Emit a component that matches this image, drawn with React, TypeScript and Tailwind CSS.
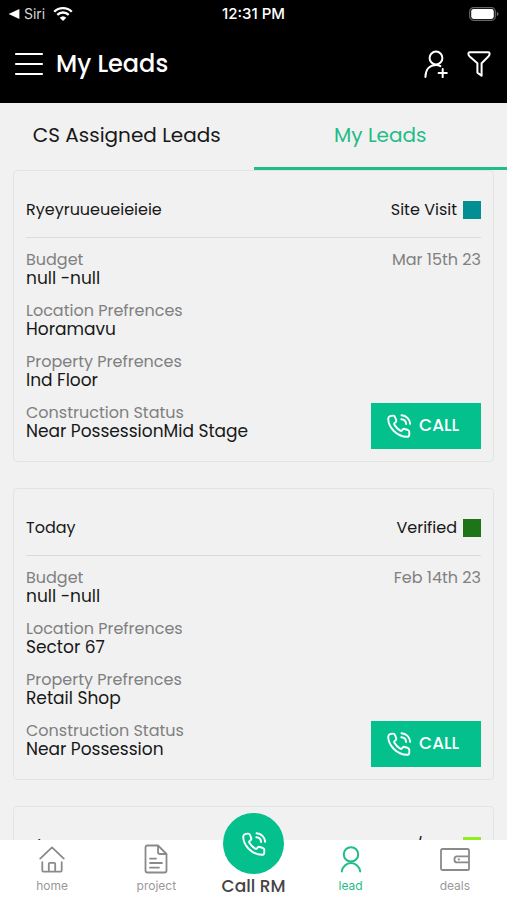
import { useState } from "react";

type Lead = {
  name: string;
  status: string;
  color: string;
  date: string;
  budget: string;
  location: string;
  property: string;
  construction: string;
};

const leads: Lead[] = [
  {
    name: "Ryeyruueueieieie",
    status: "Site Visit",
    color: "bg-[#028e92]",
    date: "Mar 15th 23",
    budget: "null -null",
    location: "Horamavu",
    property: "Ind Floor",
    construction: "Near PossessionMid Stage",
  },
  {
    name: "Today",
    status: "Verified",
    color: "bg-[#1d7419]",
    date: "Feb 14th 23",
    budget: "null -null",
    location: "Sector 67",
    property: "Retail Shop",
    construction: "Near Possession",
  },
  {
    name: "Nina",
    status: "Not Int/New",
    color: "bg-[#8cf01c]",
    date: "Feb 14th 23",
    budget: "null -null",
    location: "Sector 67",
    property: "Retail Shop",
    construction: "Near Possession",
  },
];

const PhoneIcon = ({ className }: { className: string }) => (
  <svg
    viewBox="0 0 24 24"
    fill="none"
    stroke="currentColor"
    strokeWidth="1.9"
    strokeLinecap="round"
    strokeLinejoin="round"
    className={className}
    aria-hidden="true"
  >
    <path d="M3.5 2 6 1.6Q7.4 1.4 8 3L9.2 6.2Q9.6 7.4 8.6 8.2L7.6 9Q6.8 9.8 7.4 10.8 9.6 14.6 13.2 16.6 14.2 17.2 15 16.3L15.8 15.4Q16.6 14.5 17.8 15L21 16Q22.4 16.6 22.3 18V20.6Q22.2 22.8 20 22.8C10 22.6 1.2 13.5 1.2 4.6Q1.4 2.4 3.5 2Z" />
    <path d="M14.5 1.2a9 9 0 0 1 8.6 8.6M14.3 5.2a5.2 5.2 0 0 1 4.8 4.8" />
  </svg>
);

const StatusBar = () => (
  <div className="grid grid-cols-3 items-center h-7 px-2 font-[Inter,sans-serif] text-sm text-white">
    <div className="flex items-center gap-1">
      <svg viewBox="0 0 10 10" className="w-3 h-3" fill="currentColor">
        <path d="M.5 5 9.5 .8V9.2Z" />
      </svg>
      <span className="text-[#d6d6d6]">Siri</span>
      <svg viewBox="0 0 20 15" className="w-5 h-4 ml-1" fill="none" stroke="currentColor" strokeWidth="2.3">
        <path d="M1.2 5.2a12.4 12.4 0 0 1 17.6 0M4.3 8.4a8 8 0 0 1 11.4 0" />
        <path d="M10 14.6 6.7 11.2a4.8 4.8 0 0 1 6.6 0Z" fill="currentColor" stroke="none" />
      </svg>
    </div>
    <div className="text-center text-[15px] font-medium">12:31 PM</div>
    <svg viewBox="0 0 30 14" className="w-[30px] h-[14px] justify-self-end">
      <rect x=".7" y=".7" width="25.6" height="12.6" rx="3.8" fill="none" stroke="#686868" strokeWidth="1.2" />
      <rect x="2.2" y="2.1" width="22.6" height="9.8" rx="2.3" fill="#fff" />
      <path d="M27.8 4.7q1.8.8 1.8 2.3t-1.8 2.3Z" fill="#686868" />
    </svg>
  </div>
);

const Header = () => (
  <header className="flex items-center h-[75px] pb-1 px-[14px] text-white">
    <button aria-label="Menu" className="mr-3">
      <svg viewBox="0 0 30 26" className="w-[30px] h-[26px]" stroke="currentColor" strokeWidth="2.2" strokeLinecap="round">
        <path d="M2 3h26M2 13h26M2 23h26" />
      </svg>
    </button>
    <h1 className="text-2xl leading-7 font-medium">My Leads</h1>
    <div className="flex items-center gap-[18px] ml-auto pr-[2px]">
      <button aria-label="Add lead">
        <svg viewBox="0 0 26 28" className="w-[26px] h-[28px]" fill="none" stroke="currentColor" strokeWidth="2" strokeLinecap="round">
          <circle cx="13" cy="8" r="6.4" />
          <path d="M2.4 27C2.6 19 7 14.9 13 14.9q2.4 0 4.4 1.2M19.7 19v8.2M15.6 23.1h8.2" />
        </svg>
      </button>
      <button aria-label="Filter">
        <svg viewBox="0 0 24 26" className="w-6 h-[26px]" fill="none" stroke="currentColor" strokeWidth="2" strokeLinejoin="round">
          <path d="M2.8 1.3H21.2Q22.8 1.4 22.6 3 22.5 4.2 21.6 5.2L14.6 12.2V24.8L10.4 21.6V12.2L2.4 5.2Q1.5 4.2 1.4 3 1.2 1.4 2.8 1.3Z" />
        </svg>
      </button>
    </div>
  </header>
);

const Field = ({ label, value }: { label: string; value: string }) => (
  <div>
    <dt className="text-base leading-[19px] text-[#808080]">{label}</dt>
    <dd className="text-[17px] leading-[19px] text-[#181818]">{value}</dd>
  </div>
);

const LeadCard = ({ lead }: { lead: Lead }) => (
  <article className="shrink-0 border border-[#e3e5e5] rounded-sm px-3 pb-3">
    <div className="flex items-center justify-between h-[67px] pt-3 border-b border-[#dadcdc] text-base text-[#181818]">
      <h2>{lead.name}</h2>
      <div className="flex items-center gap-[6px]">
        {lead.status}
        <span className={`w-[18px] h-[18px] ${lead.color}`} />
      </div>
    </div>
    <div className="flex justify-between pt-3">
      <dl className="flex flex-col gap-[13px] pb-2">
        <Field label="Budget" value={lead.budget} />
        <Field label="Location Prefrences" value={lead.location} />
        <Field label="Property Prefrences" value={lead.property} />
        <Field label="Construction Status" value={lead.construction} />
      </dl>
      <div className="flex flex-col items-end justify-between">
        <time className="text-base leading-[19px] text-[#808080]">{lead.date}</time>
        <button className="flex items-center gap-2 w-[110px] h-[46px] pl-4 bg-[#03c08c] text-white text-[17px] font-medium">
          <PhoneIcon className="w-6 h-6" />
          CALL
        </button>
      </div>
    </div>
  </article>
);

const navItem = "flex flex-col items-center gap-1 pt-1 font-[Inter,sans-serif] text-xs leading-4";

const BottomNav = () => (
  <nav className="grid grid-cols-[1fr_1fr_90px_1fr_1fr] bg-white h-[60px] shrink-0 text-[#999]">
    <a href="#home" className={navItem}>
      <svg viewBox="0 0 28 30" className="w-7 h-[30px]" fill="none" stroke="#8a8a8a" strokeWidth="1.8" strokeLinecap="round" strokeLinejoin="round">
        <path d="M2.2 14.6 14 3.4 25.8 14.6M4.3 18.2v8.4q0 1 1 1H22.7q1 0 1-1v-8.4M10.8 27.4v-7.6q0-1 1-1h4.4q1 0 1 1v7.6" />
      </svg>
      home
    </a>
    <a href="#project" className={navItem}>
      <svg viewBox="0 0 24 30" className="w-6 h-[30px]" fill="none" stroke="#8a8a8a" strokeWidth="1.8" strokeLinecap="round" strokeLinejoin="round">
        <path d="M14 1.5H3.5q-2 0-2 2v23q0 2 2 2h17q2 0 2-2V10L14 1.5V8q0 2 2 2h6.5M6 14.6h6M6 19h12M6 23.6h9" />
      </svg>
      project
    </a>
    <a href="#call" className="flex flex-col items-center -mt-[27px] text-[17px] leading-[22px] font-medium text-[#444] whitespace-nowrap">
      <span className="flex items-center justify-center w-[61px] h-[61px] mb-px shrink-0 rounded-full bg-[#03c08c] text-white">
        <PhoneIcon className="w-6 h-6" />
      </span>
      Call RM
    </a>
    <a href="#lead" className={`${navItem} text-[#1fbd87]`}>
      <svg viewBox="0 0 24 30" className="w-6 h-[30px]" fill="none" stroke="currentColor" strokeWidth="2" strokeLinecap="round">
        <circle cx="12" cy="10.4" r="7.2" />
        <path d="M2.8 27.4a9.3 9.8 0 0 1 18.4 0" />
      </svg>
      lead
    </a>
    <a href="#deals" className={navItem}>
      <svg viewBox="0 0 30 30" className="w-[30px] h-[30px]" fill="none" stroke="#8a8a8a" strokeWidth="1.8" strokeLinejoin="round">
        <rect x="1" y="5" width="28" height="21" rx="1.6" />
        <path d="M29 12.4H17q-2.6 0-2.6 3t2.6 3h12" />
        <path d="M17.8 15.4h2" />
      </svg>
      deals
    </a>
  </nav>
);

const App = () => {
  const [tab, setTab] = useState("mine");

  const tabClass = (name: string) =>
    tab === name
      ? "flex-1 border-b-[3px] border-[#1fbd87] text-[#1fbd87]"
      : "flex-1 border-b-[3px] border-transparent text-[#181818]";

  return (
    <div className="flex flex-col h-screen bg-[#f1f1f1] font-[Poppins,Inter,sans-serif]">
      <div className="bg-black shrink-0">
        <StatusBar />
        <Header />
      </div>
      <div className="flex h-[67px] shrink-0 text-xl">
        <button className={tabClass("assigned")} onClick={() => setTab("assigned")}>
          CS Assigned Leads
        </button>
        <button className={tabClass("mine")} onClick={() => setTab("mine")}>
          My Leads
        </button>
      </div>
      <main className="flex flex-col flex-1 min-h-0 gap-[26px] px-[13px] overflow-hidden">
        {leads.map((lead) => (
          <LeadCard key={lead.name} lead={lead} />
        ))}
      </main>
      <BottomNav />
    </div>
  );
};

export default App;
